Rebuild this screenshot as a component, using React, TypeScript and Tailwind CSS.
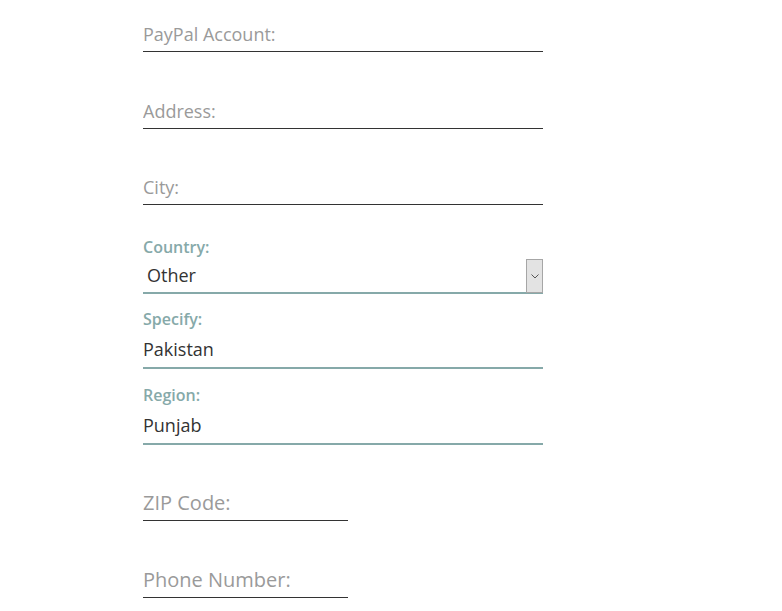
import { useState } from "react";

const FONT = { fontFamily: '"Open Sans", "Noto Sans", sans-serif' };

function PlainField({ placeholder, width, className }: { placeholder: string; width: string; className: string }) {
  return (
    <input
      type="text"
      placeholder={placeholder}
      className={`${width} ${className} block h-[34px] border-b border-[#333] bg-transparent px-0 pb-[2px] text-[#333] outline-none placeholder:text-[#9a9a9a]`}
    />
  );
}

function FieldLabel({ children }: { children: string }) {
  return <label className="block h-[19px] text-[16px] leading-[19px] font-semibold text-[#86a9a9]">{children}</label>;
}

export default function App() {
  const [country, setCountry] = useState("Other");
  const [specify, setSpecify] = useState("Pakistan");
  const [region, setRegion] = useState("Punjab");

  return (
    <div className="min-h-[611px] w-[782px] bg-white" style={FONT}>
      <div className="ml-[143px] w-[400px] pt-[18px]">
        <PlainField placeholder="PayPal Account:" width="w-[400px]" className="text-[18px]" />
        <PlainField placeholder="Address:" width="w-[400px]" className="mt-[43px] text-[18px]" />
        <PlainField placeholder="City:" width="w-[400px]" className="mt-[42px] text-[18px]" />

        {/* Country */}
        <div className="mt-[33px]">
          <FieldLabel>Country:</FieldLabel>
          <div className="relative mt-[2px]">
            <select
              value={country}
              onChange={(e) => setCountry(e.target.value)}
              className="block h-[35px] w-[400px] appearance-none border-b-2 border-[#86a9a9] bg-transparent pl-[4px] text-[18px] text-[#333] outline-none"
            >
              <option>United States</option>
              <option>United Kingdom</option>
              <option>Other</option>
            </select>
            <div className="pointer-events-none absolute right-0 top-0 flex h-[34px] w-[17px] items-center justify-center border border-[#a6a6a6] bg-[#e3e3e3]">
              <svg width="8" height="5" viewBox="0 0 8 5" fill="none">
                <path d="M0.5 0.5L4 4L7.5 0.5" stroke="#555" strokeWidth="1" />
              </svg>
            </div>
          </div>
        </div>

        {/* Specify */}
        <div className="mt-[16px]">
          <FieldLabel>Specify:</FieldLabel>
          <input
            type="text"
            value={specify}
            onChange={(e) => setSpecify(e.target.value)}
            className="mt-[2px] block h-[38px] w-[400px] border-b-2 border-[#86a9a9] bg-transparent px-0 text-[18px] text-[#333] outline-none"
          />
        </div>

        {/* Region */}
        <div className="mt-[17px]">
          <FieldLabel>Region:</FieldLabel>
          <input
            type="text"
            value={region}
            onChange={(e) => setRegion(e.target.value)}
            className="mt-[2px] block h-[38px] w-[400px] border-b-2 border-[#86a9a9] bg-transparent px-0 text-[18px] text-[#333] outline-none"
          />
        </div>

        <PlainField placeholder="ZIP Code:" width="w-[205px]" className="mt-[42px] text-[20px]" />
        <PlainField placeholder="Phone Number:" width="w-[205px]" className="mt-[43px] text-[20px]" />
      </div>
    </div>
  );
}
